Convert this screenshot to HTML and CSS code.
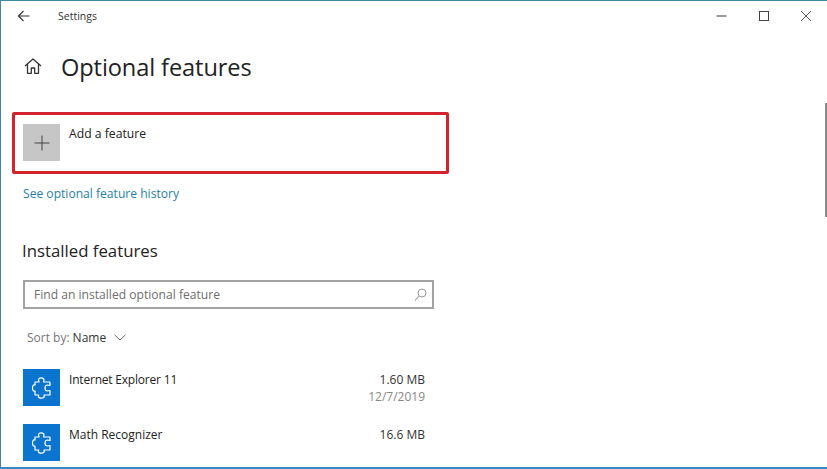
FILE: index.html
```html
<!DOCTYPE html>
<html lang="en">
<head>
<meta charset="utf-8">
<title>Settings</title>
<link rel="stylesheet" href="styles.css">
</head>
<body>
<div class="window">
  <header class="titlebar">
    <svg class="back" width="13" height="12" viewBox="0 0 13 12"><path d="M12.500 6H1.500M6.500 1 1.500 6l5 5" fill="none" stroke="#333" stroke-width="1.100"/></svg>
    <span class="app-name">Settings</span>
    <div class="controls">
      <svg width="12" height="12" viewBox="0 0 12 12"><path d="M.5 6h10" stroke="#555" stroke-width="1.200"/></svg>
      <svg width="12" height="12" viewBox="0 0 12 12"><rect x="1.500" y="1.500" width="9" height="9" fill="none" stroke="#444" stroke-width="1"/></svg>
      <svg width="12" height="12" viewBox="0 0 12 12"><path d="M1 1l10 10M11 1 1 11" fill="none" stroke="#555" stroke-width="1"/></svg>
    </div>
  </header>
  <main class="content">
    <div class="page-head">
      <svg class="home" width="18" height="16" viewBox="0 0 18 16"><path d="M1 8 9 1l8 7M3.500 6v9.300h3.800V10h3.400v5.300h3.800V6" fill="none" stroke="#333" stroke-width="1.300" stroke-linejoin="round"/></svg>
      <h1 class="page-title">Optional features</h1>
    </div>
    <section class="add-row">
      <div class="tile tile-grey">
        <svg width="16" height="16" viewBox="0 0 16 16"><path d="M8 .5v15M.5 8h15" stroke="#444" stroke-width="1"/></svg>
      </div>
      <span class="item-name">Add a feature</span>
    </section>
    <a class="history-link">See optional feature history</a>
    <h2 class="section-title">Installed features</h2>
    <div class="search">
      <span class="search-text">Find an installed optional feature</span>
      <svg width="13" height="13" viewBox="0 0 13 13"><circle cx="8" cy="5" r="4" fill="none" stroke="#999" stroke-width="1"/><path d="M5 8 1 12.500" stroke="#999" stroke-width="1.100"/></svg>
    </div>
    <div class="sort">
      <span class="sort-label">Sort by:</span>
      <span class="sort-value">Name</span>
      <svg width="12" height="7" viewBox="0 0 12 7"><path d="M.5.800 6 6l5.500-5.200" fill="none" stroke="#666" stroke-width="1"/></svg>
    </div>
    <ul class="features">
      <li class="feature">
        <div class="tile tile-blue">
          <svg width="20" height="22" viewBox="0 0 20 22"><path d="M7 5 6.500 3Q6.500.8 9.200.8T12 3L11.500 5H18V8.500L15.500 8Q13 8 13 11T15.500 14L18 13.500V18H12L12.300 19Q12.300 21.200 9.300 21.200T6.300 19L6.700 18H3V14L2.500 14.300Q.5 14.300.5 11T2.500 7.700L3 8V5Z" fill="none" stroke="#fff" stroke-width="1.200" stroke-linejoin="round"/></svg>
        </div>
        <span class="item-name item-name-tight">Internet Explorer 11</span>
        <div class="meta"><span class="size">1.60 MB</span><span class="date">12/7/2019</span></div>
      </li>
      <li class="feature">
        <div class="tile tile-blue">
          <svg width="20" height="22" viewBox="0 0 20 22"><path d="M7 5 6.500 3Q6.500.8 9.200.8T12 3L11.500 5H18V8.500L15.500 8Q13 8 13 11T15.500 14L18 13.500V18H12L12.300 19Q12.300 21.200 9.300 21.200T6.300 19L6.700 18H3V14L2.500 14.300Q.5 14.300.5 11T2.500 7.700L3 8V5Z" fill="none" stroke="#fff" stroke-width="1.200" stroke-linejoin="round"/></svg>
        </div>
        <span class="item-name">Math Recognizer</span>
        <div class="meta"><span class="size">16.6 MB</span></div>
      </li>
    </ul>
  </main>
  <div class="scrollbar"></div>
</div>
</body>
</html>
```
FILE: styles.css
```css
* { box-sizing: border-box; }
html, body { margin: 0; padding: 0; }
body { background: #fff; font-family: "Open Sans", "Noto Sans", "Liberation Sans", sans-serif; color: #222; }
.window {
  position: relative;
  width: 827px;
  height: 469px;
  overflow: hidden;
  background: #fff;
  border-top: 1px solid #3f8a9c;
  border-left: 1px solid #3f86b0;
  border-bottom: 2px solid #3b86c4;
}
.titlebar { display: flex; align-items: center; height: 30px; padding-left: 16px; }
.back { flex: none; }
.app-name { margin-left: 28px; font-size: 10.500px; color: #333; }
.controls { margin-left: auto; display: flex; gap: 30px; padding-right: 15px; }
.content { padding: 0 0 0 22px; }
.page-head { display: flex; align-items: center; height: 36px; margin-top: 18px; padding-left: 1px; }
.home { margin-bottom: 2px; }
.page-title { margin: 0 0 0 19px; font-size: 23.600px; font-weight: 400; color: #222; letter-spacing: -.1px; }
.add-row {
  display: flex;
  align-items: flex-start;
  width: 437px;
  height: 62px;
  margin: 27px 0 0 -11px;
  padding: 9px 0 0 8px;
  border: 3px solid #d2232f;
  border-radius: 2px;
}
.add-row .item-name { margin-top: 2px; font-size: 12.200px; }
.tile { flex: none; width: 37px; height: 37px; display: flex; align-items: center; justify-content: center; }
.tile-grey { background: #c6c6c6; }
.tile-blue { background: #0b74cf; }
.item-name { margin-left: 9px; margin-top: 3px; font-size: 12px; line-height: 16px; color: #222; }
.item-name-tight { letter-spacing: -.2px; }
.history-link { display: block; margin-top: 11px; font-size: 12.100px; line-height: 18px; color: #1f7fa8; }
.section-title { margin: 36px 0 0 -1px; font-size: 16.800px; line-height: 24px; font-weight: 400; color: #222; }
.search {
  display: flex;
  align-items: center;
  justify-content: space-between;
  width: 411px;
  height: 29px;
  margin-top: 17px;
  padding: 0 5px 0 9px;
  border: 2px solid #a3a3a3;
}
.search-text { font-size: 12.100px; color: #6e6e6e; }
.sort { display: flex; align-items: center; height: 18px; margin-top: 19px; padding-left: 4px; font-size: 12px; }
.sort-label { color: #777; }
.sort-value { margin-left: 3px; color: #333; }
.sort svg { margin-left: 8px; }
.features { list-style: none; margin: 23px 0 0; padding: 0; }
.feature { display: flex; align-items: flex-start; width: 402px; height: 55px; }
.meta { margin-left: auto; margin-top: 2px; display: flex; flex-direction: column; align-items: flex-end; font-size: 12px; line-height: 17px; }
.size { color: #333; }
.date { color: #888; }
.scrollbar { position: absolute; right: 0; top: 102px; width: 2px; height: 114px; background: #8a8a8a; }
```
